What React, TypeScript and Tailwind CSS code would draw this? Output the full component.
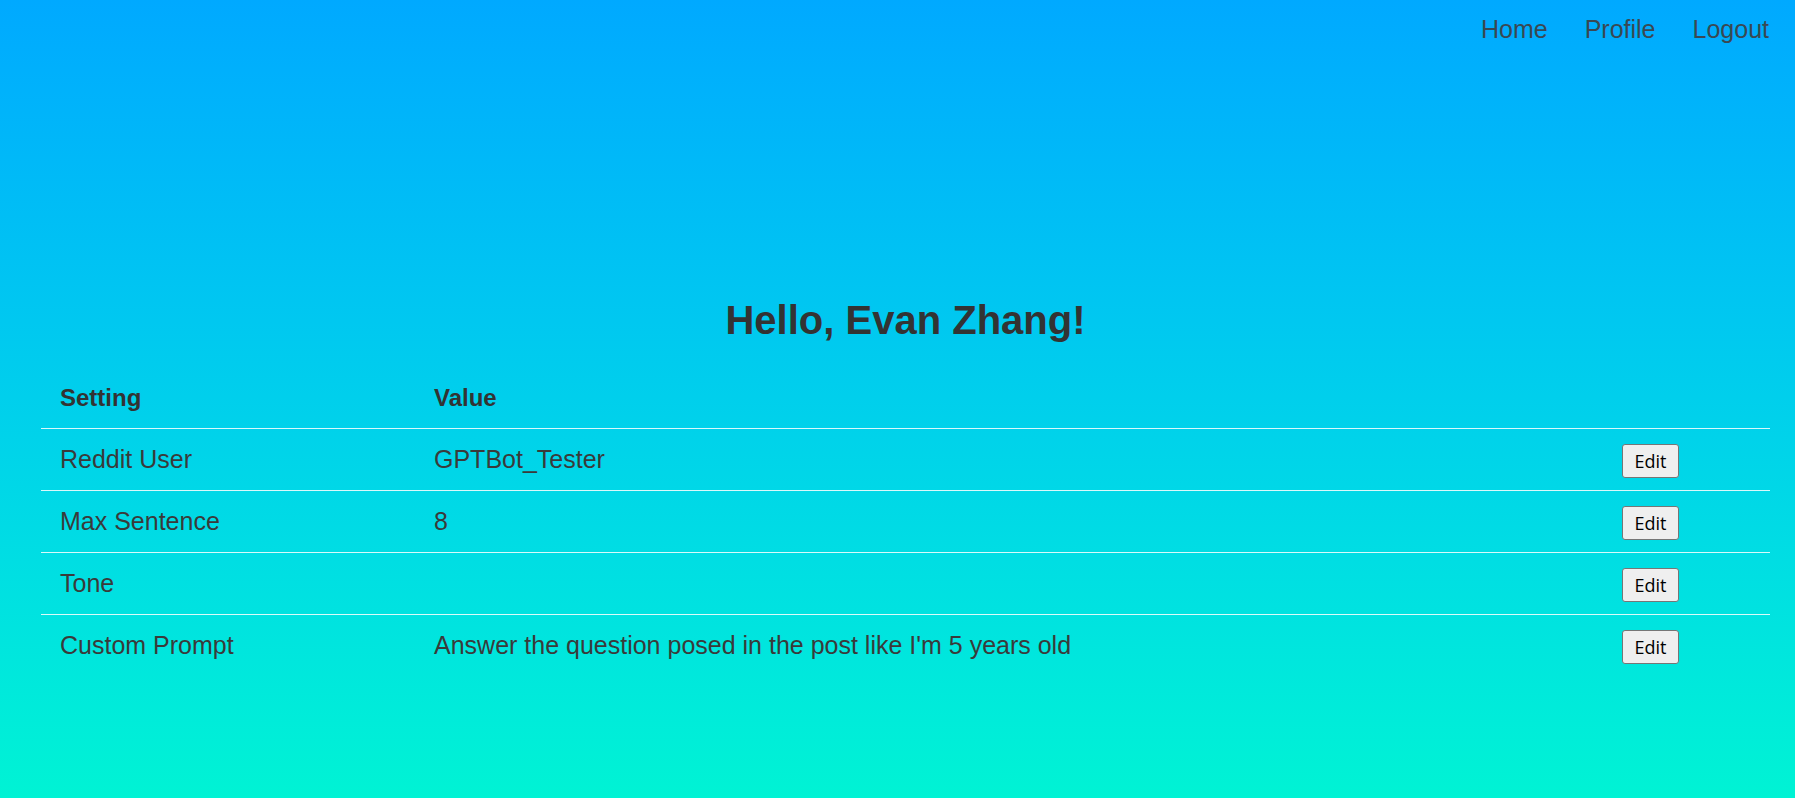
import React from "react";

const rows = [
  { setting: "Reddit User", value: "GPTBot_Tester" },
  { setting: "Max Sentence", value: "8" },
  { setting: "Tone", value: "" },
  { setting: "Custom Prompt", value: "Answer the question posed in the post like I'm 5 years old" },
];

export default function App() {
  return (
    <div className="h-[798px] w-full bg-gradient-to-b from-[#00a9ff] to-[#00f3d4] font-['Liberation_Sans',Arial,sans-serif] text-[#353535] overflow-hidden">
      <nav className="flex justify-end gap-[37px] pr-[26px] pt-[12px] text-[25px] leading-[34px] text-[#3a4852]">
        <a href="#" className="">Home</a>
        <a href="#" className="">Profile</a>
        <a href="#" className="">Logout</a>
      </nav>
      <main className="pl-[41px] pr-[25px] pt-[250px]">
        <h1 className="text-center text-[40px] leading-[48px] font-bold text-[#333] mb-[23px]">Hello, Evan Zhang!</h1>
        <div className="w-full">
          <div className="grid grid-cols-[375px_1188px_1fr] h-[62px] items-center border-b border-white/85 text-[24px] font-bold text-[#333]">
            <div className="pl-[19px]">Setting</div>
            <div className="pl-[18px]">Value</div>
            <div></div>
          </div>
          {rows.map((r, i) => (
            <div
              key={r.setting}
              className={`grid grid-cols-[375px_1188px_1fr] h-[62px] items-center text-[25px] text-[#3a3a3a] ${i < rows.length - 1 ? "border-b border-white/85" : ""}`}
            >
              <div className="pl-[19px]">{r.setting}</div>
              <div className="pl-[18px]">{r.value}</div>
              <div className="pl-[18px]">
                <button className="w-[57px] h-[34px] bg-[#efefef] border border-[#767676] rounded-[3px] text-[18px] leading-none text-black font-['Open_Sans',sans-serif]">
                  Edit
                </button>
              </div>
            </div>
          ))}
        </div>
      </main>
    </div>
  );
}
